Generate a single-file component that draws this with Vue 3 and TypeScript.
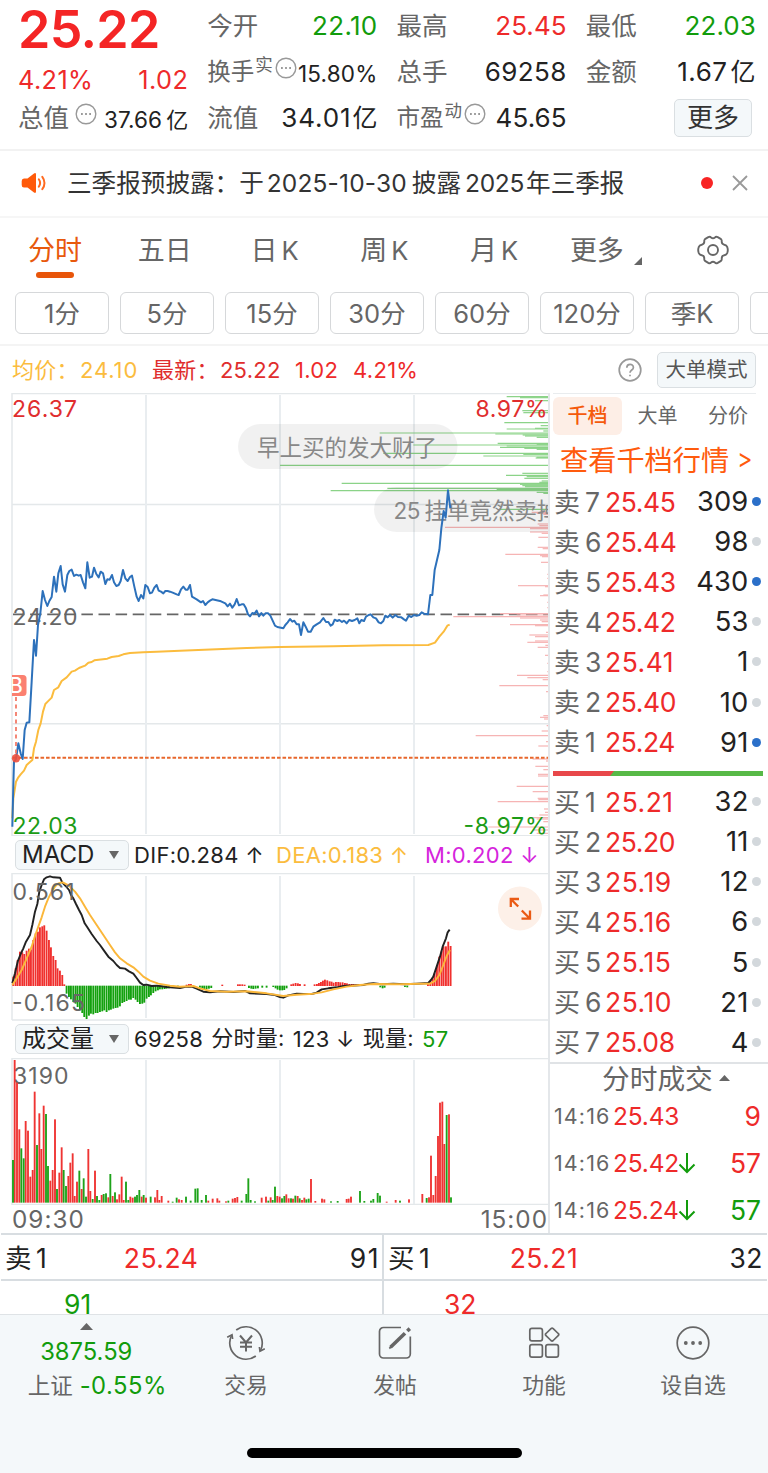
<script setup lang="ts">
type Tone = 'red' | 'green' | 'dark'
type Bar = [number, number]

interface Level { side: string; no: number; price: string; qty: number; big?: boolean }

const sells: Level[] = [
  { side: '卖', no: 7, price: '25.45', qty: 309, big: true },
  { side: '卖', no: 6, price: '25.44', qty: 98 },
  { side: '卖', no: 5, price: '25.43', qty: 430, big: true },
  { side: '卖', no: 4, price: '25.42', qty: 53 },
  { side: '卖', no: 3, price: '25.41', qty: 1 },
  { side: '卖', no: 2, price: '25.40', qty: 10 },
  { side: '卖', no: 1, price: '25.24', qty: 91, big: true },
]
const buys: Level[] = [
  { side: '买', no: 1, price: '25.21', qty: 32 },
  { side: '买', no: 2, price: '25.20', qty: 11 },
  { side: '买', no: 3, price: '25.19', qty: 12 },
  { side: '买', no: 4, price: '25.16', qty: 6 },
  { side: '买', no: 5, price: '25.15', qty: 5 },
  { side: '买', no: 6, price: '25.10', qty: 21 },
  { side: '买', no: 7, price: '25.08', qty: 4 },
]
const trades: { time: string; price: string; down: boolean; qty: number; tone: Tone }[] = [
  { time: '14:16', price: '25.43', down: false, qty: 9, tone: 'red' },
  { time: '14:16', price: '25.42', down: true, qty: 57, tone: 'red' },
  { time: '14:16', price: '25.24', down: true, qty: 57, tone: 'green' },
]
const periods = ['1分', '5分', '15分', '30分', '60分', '120分', '季K', '']

// The narrow "1" gets wider tracking so that the price column stays aligned.
const hasOne = (price: string) => price.includes('1')

// Chart series are stored in thirds of a pixel.
const priceLine =
  '37,1325 40,1200 42,1130 48,1122 55,1075 62,1105 68,1122 74,1035 80,1013 88,1012 95,890 102,765 108,812 114,720 121,685 128,618 135,645 142,663 148,648 155,636 162,575 169,620 175,565 182,543 188,598 195,620 202,570 208,558 215,554 222,573 229,569 236,572 242,570 249,592 256,610 262,532 269,578 276,575 282,548 289,567 296,577 302,560 309,565 316,597 322,583 329,584 336,570 342,592 349,603 356,600 362,588 369,555 376,580 383,588 390,576 396,572 403,605 410,635 416,648 423,630 430,640 436,600 443,606 450,625 456,623 463,608 470,600 476,617 483,620 490,625 496,618 503,618 510,620 518,623 530,628 536,630 543,613 550,605 557,614 563,614 570,600 576,635 590,643 603,652 609,648 616,660 623,652 630,647 637,643 650,646 663,649 676,655 683,664 690,656 697,668 704,658 710,642 717,661 725,658 731,658 738,670 744,688 750,694 757,684 764,686 770,677 777,694 784,684 790,692 797,685 804,685 811,692 818,707 825,722 832,726 850,730 856,720 863,712 870,702 877,710 883,707 890,718 897,718 903,750 910,712 917,725 924,740 932,740 940,725 950,718 960,712 970,699 978,711 985,711 992,722 998,718 1004,704 1012,708 1018,705 1026,711 1032,707 1040,715 1048,705 1056,708 1064,705 1072,700 1078,715 1084,705 1092,708 1098,695 1106,690 1112,688 1120,697 1128,700 1136,712 1143,715 1150,708 1156,692 1163,697 1170,690 1178,698 1186,690 1194,696 1204,697 1212,703 1218,707 1226,692 1234,696 1242,690 1250,692 1258,690 1265,682 1272,686 1284,688 1291,630 1297,630 1304,555 1311,525 1318,495 1324,430 1331,378 1337,398 1344,316 1351,370'
const averageLine =
  '37,1300 40,1240 48,1190 55,1177 62,1168 72,1157 80,1140 90,1131 97,1125 102,1090 108,1070 115,1035 122,1015 129,980 136,957 143,950 155,938 162,915 175,907 185,888 200,877 215,860 225,857 237,849 255,842 265,833 275,831 283,826 322,821 335,816 356,813 370,808 390,804 430,802 470,800 540,797 650,793 740,789 840,786 1000,784 1150,781 1285,780 1305,773 1318,755 1331,740 1342,722 1349,719'
const difLine =
  '37,460 45,430 53,395 62,372 70,355 78,335 90,315 97,285 105,245 112,222 118,185 125,165 132,148 140,142 150,139 160,142 180,143 187,158 197,168 207,180 213,195 220,205 228,222 237,240 245,255 254,280 262,292 275,312 290,333 300,345 312,362 325,380 340,393 350,405 360,414 375,416 387,424 400,431 410,444 420,458 430,465 440,464 455,468 470,467 500,471 540,474 560,470 575,470 590,476 610,485 630,487 660,484 700,486 735,483 750,490 800,492 825,495 840,501 850,503 865,496 890,491 910,492 935,492 950,488 965,478 985,475 1010,472 1030,468 1090,465 1105,461 1120,460 1145,463 1180,461 1215,463 1250,461 1285,459 1293,450 1300,440 1310,410 1320,380 1328,350 1338,325 1343,307 1349,299'
const deaLine =
  '37,465 50,445 65,420 80,385 95,350 105,318 115,290 125,262 135,230 145,205 155,185 165,170 175,160 188,157 200,163 212,172 225,185 240,205 255,230 270,255 290,285 310,315 330,345 345,367 360,385 380,400 400,412 415,425 430,440 450,452 475,461 510,467 540,470 580,468 600,475 630,483 680,485 740,484 800,490 850,498 890,494 940,491 965,487 1000,478 1040,470 1080,465 1120,462 1200,463 1260,461 1290,461 1305,453 1318,435 1330,405 1340,378 1350,360'

// Order-book depth: [y, start x], each bar runs to the right edge.
const depthSell: Bar[] = [
  [35, 710], [38, 750], [47, 795], [77, 757], [83, 760], [113, 703], [122, 812], [130, 795], [132, 710], [138, 820], [144, 329], [147, 676], [150, 758], [153, 765], [157, 800], [175, 683], [178, 800], [180, 430], [183, 710], [187, 690], [190, 763], [193, 800], [205, 340], [208, 760], [213, 640], [217, 800], [219, 797], [241, 30], [265, 757], [271, 708], [275, 770], [280, 763], [288, 815], [292, 808], [295, 215], [298, 750], [302, 757], [305, 765], [310, 352], [313, 680], [317, 182], [322, 800], [325, 820], [373, 690],
]
const depthBuy: Bar[] = [
  [382, 785], [385, 800], [388, 820], [396, 828], [417, 803], [422, 808], [427, 525], [431, 780], [441, 780], [445, 815], [457, 805], [487, 803], [491, 818], [508, 706], [512, 810], [515, 816], [532, 813], [568, 832], [580, 832], [602, 744], [605, 825], [630, 820], [632, 810], [652, 832], [668, 832], [686, 690], [690, 740], [695, 550], [699, 750], [705, 810], [710, 815], [719, 720], [722, 795], [742, 828], [750, 778], [755, 795], [768, 795], [772, 772], [781, 826], [787, 803], [811, 825], [835, 832], [860, 832], [871, 741], [878, 772], [884, 818], [902, 688], [920, 828], [992, 820], [997, 810], [1002, 822], [1022, 830], [1038, 815], [1052, 617], [1070, 828], [1083, 805], [1122, 788], [1128, 828], [1144, 796], [1154, 820], [1168, 804], [1173, 804], [1204, 740], [1220, 788], [1240, 803], [1244, 805], [1250, 683], [1272, 822], [1282, 825], [1290, 808], [1298, 780], [1302, 800], [1310, 820], [1326, 655], [1335, 790], [1345, 800],
]

const histogram: Bar[] = [
  [40, 440], [47, 415], [53, 390], [60, 365], [67, 367], [73, 372], [80, 362], [87, 356], [93, 358], [100, 330], [107, 310], [114, 305], [120, 292], [127, 289], [133, 286], [140, 302], [147, 330], [153, 352], [160, 378], [167, 390], [173, 415], [180, 422], [187, 435], [193, 463],
  [200, 490], [207, 500], [213, 507], [220, 515], [227, 520], [233, 530], [240, 540], [247, 548], [253, 560], [260, 566], [267, 556], [273, 550], [280, 552], [287, 548], [293, 548], [300, 545], [307, 543], [313, 540], [320, 545], [327, 540], [333, 538], [340, 535], [347, 533], [353, 532], [360, 528], [367, 518], [373, 515], [380, 512], [387, 508], [393, 508], [400, 503], [407, 508], [413, 515], [420, 521], [427, 520], [433, 517], [440, 505], [447, 500], [453, 495], [460, 488], [467, 483], [474, 480], [480, 477], [487, 477], [494, 476], [500, 475], [507, 474], [520, 472], [534, 472],
  [560, 464], [567, 462], [573, 462], [600, 472], [607, 474], [613, 476], [620, 476], [627, 475], [634, 473], [667, 464], [714, 463], [720, 463], [727, 463], [734, 464], [747, 473], [754, 475], [760, 476], [767, 475], [774, 474], [787, 472], [800, 472],
  [820, 470], [827, 474], [833, 478], [840, 480], [847, 480], [853, 479], [860, 474], [874, 463], [880, 461], [887, 459], [894, 460], [900, 462], [914, 463], [944, 463], [951, 462], [957, 459], [963, 456], [969, 452], [975, 449], [982, 451], [989, 454], [995, 455], [1001, 458], [1008, 456], [1015, 456], [1021, 457], [1028, 457], [1035, 459], [1041, 460], [1048, 462], [1055, 462], [1061, 462], [1068, 463], [1075, 463], [1141, 471], [1148, 474], [1154, 472], [1215, 470], [1222, 471],
  [1284, 462], [1291, 453], [1298, 445], [1304, 430], [1311, 405], [1318, 380], [1325, 364], [1331, 349], [1338, 349], [1345, 335], [1352, 348],
]
const histBase = 467

const rising: Bar[] = [
  [44, 690], [51, 758], [58, 898], [77, 873], [84, 902], [91, 1040], [98, 1020], [104, 785], [118, 850], [124, 957], [131, 827], [151, 1052], [158, 1020], [165, 868], [178, 1028], [185, 952], [205, 1038], [211, 998], [218, 970], [224, 1098], [231, 1055], [245, 1077], [265, 957], [271, 1083], [285, 1022], [305, 1095], [325, 1102], [338, 1098], [351, 1108], [358, 1093], [365, 1040], [371, 1110], [391, 1100], [398, 1103], [425, 1100], [438, 1103], [465, 1102], [472, 1080], [478, 1110], [485, 1098], [505, 1112], [537, 1108], [545, 1110], [625, 1112], [638, 1106], [652, 1105], [658, 1112], [678, 1114], [698, 1106], [705, 1104], [712, 1101], [785, 1103], [798, 1100], [812, 1102], [832, 1098], [839, 1100], [859, 1093], [866, 1105], [879, 1106], [893, 1098], [906, 1110], [913, 1103], [933, 1047], [946, 1113], [966, 1106], [973, 1108], [1040, 1107], [1046, 1106], [1053, 1100], [1160, 1115], [1187, 1110], [1227, 1108], [1267, 1092], [1287, 1102], [1293, 977], [1300, 1095], [1307, 1038], [1314, 918], [1320, 818], [1327, 815], [1333, 942], [1347, 853],
]
const falling: Bar[] = [
  [39, 990], [64, 955], [71, 985], [111, 945], [138, 852], [144, 1008], [171, 1077], [191, 1020], [198, 1068], [238, 1022], [251, 1045], [258, 1100], [278, 1107], [291, 1098], [298, 1110], [311, 1092], [318, 1090], [331, 1032], [345, 1087], [378, 1055], [385, 1110], [405, 1100], [411, 1095], [418, 1080], [431, 1095], [452, 1100], [518, 1115], [530, 1103], [558, 1100], [572, 1112], [586, 1076], [593, 1075], [605, 1110], [618, 1095], [685, 1112], [725, 1112], [739, 1092], [745, 1045], [752, 1110], [765, 1114], [805, 1112], [818, 1110], [825, 1070], [846, 1105], [853, 1098], [873, 1105], [886, 1097], [899, 1105], [919, 1108], [926, 1106], [993, 1114], [1013, 1113], [1080, 1083], [1093, 1113], [1113, 1112], [1120, 1107], [1133, 1089], [1140, 1097], [1200, 1112], [1280, 1104], [1340, 855], [1353, 1102],
]
const volBase = 1118
</script>

<template>
  <div class="page">
    <section class="quote">
      <div class="q-col">
        <div class="last">25.22</div>
        <div class="chg red"><span>4.21%</span><span>1.02</span></div>
        <div class="q-row first-total">
          <span class="lab">总值</span>
          <svg class="dots" viewBox="0 0 22 22"><circle cx="11" cy="11" r="9.8" /><path d="M6 11h1.8M10.1 11h1.8M14.2 11H16" /></svg>
          <b class="small">37.66<i>亿</i></b>
        </div>
      </div>
      <div class="q-col">
        <div class="q-row"><span class="lab">今开</span><b class="green open">22.10</b></div>
        <div class="q-row tight">
          <span class="lab narrow">换手</span><sup>实</sup>
          <svg class="dots up" viewBox="0 0 22 22"><circle cx="11" cy="11" r="9.8" /><path d="M6 11h1.8M10.1 11h1.8M14.2 11H16" /></svg>
          <b class="small pct">15.80%</b>
        </div>
        <div class="q-row"><span class="lab">流值</span><b class="float">34.01<i>亿</i></b></div>
      </div>
      <div class="q-col">
        <div class="q-row"><span class="lab">最高</span><b class="red">25.45</b></div>
        <div class="q-row"><span class="lab">总手</span><b class="total">69258</b></div>
        <div class="q-row tight">
          <span class="lab narrow">市盈</span><sup>动</sup>
          <svg class="dots up" viewBox="0 0 22 22"><circle cx="11" cy="11" r="9.8" /><path d="M6 11h1.8M10.1 11h1.8M14.2 11H16" /></svg>
          <b>45.65</b>
        </div>
      </div>
      <div class="q-col">
        <div class="q-row"><span class="lab">最低</span><b class="green">22.03</b></div>
        <div class="q-row"><span class="lab">金额</span><b class="amount">1.67<i>亿</i></b></div>
        <div class="q-row end"><button class="more">更多</button></div>
      </div>
    </section>

    <section class="notice">
      <svg class="horn" viewBox="0 0 26 22">
        <path fill="#ff5a0a" d="M3 6.500Q.7 6.500 .7 9V13Q.7 15.500 3 15.500H6.500L13 20.600Q15 21.500 15 19.500V2.500Q15 .5 13 1.400L6.500 6.500Z" />
        <path d="M17.800 7.200c1.600 2.300 1.600 5.300 0 7.600M21.300 4.800c2.900 3.600 2.900 8.800 0 12.400" fill="none" stroke="#ff6a20" stroke-width="2" stroke-linecap="round" />
      </svg>
      <div class="n-text">
        <span>三季报预披露：</span><span>于</span><span class="num">2025-10-30</span><span>披露</span><span class="num year">2025</span><span>年三季报</span>
      </div>
      <i class="reddot"></i>
      <svg class="close" viewBox="0 0 16 16"><path d="M1 1l14 14M15 1L1 15" /></svg>
    </section>

    <nav class="tabs">
      <span class="on">分时</span><span>五日</span><span>日<em>K</em></span><span>周<em>K</em></span><span>月<em>K</em></span>
      <span class="tri">更多<svg viewBox="0 0 8 8"><path d="M8 0v8H0z" /></svg></span>
      <span class="set">
        <svg class="gear" viewBox="0 0 32 30">
          <path d="M11.300 2.200Q13 1.300 14 2.400Q16 4 18 2.400Q19 1.300 20.700 2.200L24 4.100Q25 5 24.700 6.800Q24.800 9.200 27.300 9.800Q29.500 10.200 30.300 12.200Q31.300 15 30.300 17.800Q29.500 19.800 27.300 20.200Q24.800 20.800 24.700 23.200Q25 25 24 25.900L20.700 27.800Q19 28.700 18 27.600Q16 26 14 27.600Q13 28.700 11.300 27.800L8 25.900Q7 25 7.300 23.200Q7.200 20.800 4.700 20.200Q2.500 19.800 1.700 17.800Q.7 15 1.700 12.200Q2.500 10.200 4.700 9.800Q7.200 9.200 7.300 6.800Q7 5 8 4.100z" />
          <circle cx="16" cy="15" r="5" />
        </svg>
      </span>
    </nav>

    <div class="periods"><span v-for="p in periods" :key="p">{{ p }}</span></div>

    <div class="legend">
      <span class="avg">均价：<em>24.10</em></span>
      <span class="new">最新：<em>25.22</em></span>
      <em class="red v1">1.02</em><em class="red">4.21%</em>
      <svg class="help" viewBox="0 0 24 24"><circle cx="12" cy="12" r="10.800" /><path d="M8.800 9.800c0-4.600 6.600-4.400 6.600-.4 0 2.600-3.400 2.600-3.400 5.400" /><path d="M12 16.700v1.600" /></svg>
      <button class="mode">大单模式</button>
    </div>

    <main class="body">
      <div class="left">
        <svg class="chart" width="548" height="443" viewBox="0 393 548 443">
          <g class="grid">
            <path d="M12 393.500H548M12 393V836M12 835.700H548M12 504.500H548M12 723.800H548" />
            <path class="v" d="M146 395V834M280 395V834M414 395V834" />
          </g>
          <path d="M13 614.300H548" stroke="#666" stroke-width="1.700" stroke-dasharray="11.500 5.600" />
          <text x="12.500" y="625" class="axis" textLength="65">24.20</text>
          <g transform="translate(270 385) scale(.33333)" stroke-width="3.600">
            <path v-for="(d, i) in depthSell" :key="'s' + i" :d="`M${d[1]} ${d[0]}H835`" stroke="#8bd388" />
            <path v-for="(d, i) in depthBuy" :key="'b' + i" :d="`M${d[1]} ${d[0]}H835`" stroke="#f6b4b4" />
          </g>
          <rect x="238" y="424" width="219.500" height="45" rx="22.500" fill="#000" opacity=".055" />
          <text x="257" y="455.500" class="chat" textLength="180">早上买的发大财了</text>
          <path d="M548 487H396.500a22.500 22.500 0 0 0 0 45H548z" fill="#000" opacity=".055" />
          <text x="393.500" y="518.500" class="chat" textLength="27">25</text>
          <text x="424.500" y="518.500" class="chat" textLength="135">挂单竟然卖掉</text>
          <path d="M13 757.700H548" stroke="#e8672c" stroke-width="2" stroke-dasharray="3.600 1.900" />
          <g transform="translate(0 385) scale(.33333)" fill="none" stroke-linejoin="round">
            <polyline :points="averageLine" stroke="#fbbc3e" stroke-width="6" />
            <polyline :points="priceLine" stroke="#2d71bb" stroke-width="6" />
          </g>
          <path d="M16 697V756" stroke="#f37a68" stroke-width="1.800" stroke-dasharray="4 3.500" />
          <circle cx="16" cy="758.300" r="4.200" fill="#ee4f3d" opacity=".9" />
          <path d="M12 675h11a3.500 3.500 0 0 1 3.500 3.500v14a3.500 3.500 0 0 1-3.500 3.500H12z" fill="#fb8070" />
          <svg x="12" y="675" width="16" height="22"><text x="-3" y="18" class="flag">B</text></svg>
          <text x="12" y="417" class="axis up" textLength="65">26.37</text>
          <text x="12.500" y="834" class="axis down" textLength="65">22.03</text>
          <text x="475.500" y="417" class="axis up" textLength="72">8.97%</text>
          <text x="463.500" y="834" class="axis down" textLength="84">-8.97%</text>
        </svg>

        <div class="ind">
          <button class="pick">MACD<svg viewBox="0 0 10 8"><path d="M0 0h10L5 8z" /></svg></button>
          <span class="dif">DIF:0.284 ↑</span><span class="dea">DEA:0.183 ↑</span><span class="m">M:0.202 ↓</span>
        </div>

        <svg class="chart" width="548" height="148" viewBox="0 873 548 148">
          <g class="grid">
            <path d="M12 873.500H548M12 873V1020M12 1020H548" />
            <path class="v" d="M146 876V1018M280 876V1018M414 876V1018" />
          </g>
          <g transform="translate(0 830) scale(.33333)">
            <rect
              v-for="(h, i) in histogram" :key="i" :x="h[0] - 3" :y="Math.min(h[1], histBase)"
              width="5.600" :height="Math.abs(h[1] - histBase) + 1" :fill="h[1] < histBase ? '#f0302e' : '#13a10e'"
            />
            <g fill="none" stroke-linejoin="round" stroke-width="5.800">
              <polyline :points="difLine" stroke="#222" />
              <polyline :points="deaLine" stroke="#fbb73a" />
            </g>
          </g>
          <text x="12.500" y="899.500" class="axis" textLength="62">0.561</text>
          <text x="12" y="1010.500" class="axis" textLength="73">-0.165</text>
          <circle cx="520" cy="908.500" r="22" fill="#fdf0e8" />
          <path d="M518.200 906.500L511 899.200M510.800 907V899H519M521.800 910.500L529.500 918.200M530 910.500V918.600H521.500" fill="none" stroke="#ea5a14" stroke-width="2.300" />
        </svg>

        <div class="ind vol">
          <button class="pick">成交量<svg viewBox="0 0 10 8"><path d="M0 0h10L5 8z" /></svg></button>
          <span>69258</span><span class="cn">分时量<em>:</em></span><span>123 ↓</span><span class="cn">现量<em>:</em></span><span class="green">57</span>
        </div>

        <svg class="chart" width="548" height="147" viewBox="0 1058 548 147">
          <g class="grid">
            <path d="M12 1058.500H548M12 1058V1205M12 1204.500H548" />
            <path class="v" d="M146 1060V1204M280 1060V1204M414 1060V1204" />
          </g>
          <text x="13" y="1084" class="axis" textLength="55.500">3190</text>
          <g transform="translate(0 830) scale(.33333)">
            <rect v-for="(b, i) in rising" :key="'r' + i" :x="b[0] - 2.800" :y="b[1]" width="5.600" :height="volBase - b[1]" fill="#ef3433" />
            <rect v-for="(b, i) in falling" :key="'f' + i" :x="b[0] - 2.800" :y="b[1]" width="5.600" :height="volBase - b[1]" fill="#1ea31a" />
          </g>
        </svg>
        <div class="times"><span>09:30</span><span>15:00</span></div>
      </div>

      <aside class="right">
        <div class="r-tabs"><span class="on">千档</span><span>大单</span><span>分价</span></div>
        <a class="link">查看千档行情<em>&gt;</em></a>
        <div v-for="l in sells" :key="l.price" class="lvl">
          <span class="side">{{ l.side }}</span><span class="no">{{ l.no }}</span><span class="px" :class="{ one: hasOne(l.price) }">{{ l.price }}</span><span class="qty">{{ l.qty }}</span><i :class="{ big: l.big }"></i>
        </div>
        <svg class="ratio" viewBox="0 0 210 5"><path fill="#57b947" d="M0 0h210v5H0z" /><path fill="#e8484a" d="M0 0h61l-4 5H0z" /></svg>
        <div v-for="l in buys" :key="l.price" class="lvl">
          <span class="side">{{ l.side }}</span><span class="no">{{ l.no }}</span><span class="px" :class="{ one: hasOne(l.price) }">{{ l.price }}</span><span class="qty">{{ l.qty }}</span><i :class="{ big: l.big }"></i>
        </div>
        <div class="t-head">分时成交<svg viewBox="0 0 11 6"><path d="M0 6L5.500 0 11 6z" /></svg></div>
        <div v-for="t in trades" :key="t.price" class="trade">
          <span class="time">{{ t.time }}</span><span class="tp">{{ t.price }}</span>
          <svg viewBox="0 0 18 22"><path v-if="t.down" d="M9 1v18.500M1.500 12.500L9 20l7.500-7.500" /></svg>
          <span class="tq" :class="t.tone">{{ t.qty }}</span>
        </div>
      </aside>
    </main>

    <section class="best">
      <div class="half">
        <div class="b-row"><span>卖<em>1</em></span><span class="red">25.24</span><span class="n91">91</span></div>
        <div class="b-next green">91</div>
      </div>
      <div class="half second">
        <div class="b-row"><span>买<em>1</em></span><span class="red">25.21</span><span>32</span></div>
        <div class="b-next red">32</div>
      </div>
    </section>

    <footer class="bar">
      <div class="items">
        <div class="index">
          <svg viewBox="0 0 13 7"><path d="M0 7L6.500 0 13 7z" /></svg>
          <span class="green pts">3875.59</span>
          <span class="name">上证<em class="green">-0.55%</em></span>
        </div>
        <div class="item">
          <svg viewBox="0 0 40 36">
            <path d="M10.200 5A16.300 16.300 0 0 1 34.700 25M29.800 31A16.300 16.300 0 0 1 5.300 11" />
            <path d="M1.200 12.200L6 9.800L6.600 14M38.800 23.800L34 26.200L33.400 22" />
            <path d="M14 10.500L20 17.500L26 10.500M20 17.500V26.500M14 17.500H26M14 21.800H26" stroke-width="2" />
          </svg>交易
        </div>
        <div class="item">
          <svg viewBox="0 0 40 36">
            <path d="M26 2.500H8.500a4 4 0 0 0-4 4V29a4 4 0 0 0 4 4h22.800a4 4 0 0 0 4-4V11.500" />
            <path d="M15.500 22.300L30 8.200" stroke-width="3.600" /><path d="M32.300 6L34.800 3.600" stroke-width="3.600" /><path d="M14.300 23.500l2.500-2.300" />
          </svg>发帖
        </div>
        <div class="item">
          <svg viewBox="0 0 40 36">
            <rect x="5.800" y="3.300" width="12.600" height="12.600" rx="2.200" /><rect x="5.800" y="19.600" width="12.600" height="12.600" rx="2.200" /><rect x="21.800" y="19.600" width="12.600" height="12.600" rx="2.200" />
            <path d="M27 3.700L22 8.500q-1.200 1.100 0 2.200L27 15.500q1.100 1 2.200 0L34.200 10.700q1.200-1.100 0-2.200L29.200 3.700q-1.100-1-2.200 0z" />
          </svg>功能
        </div>
        <div class="item">
          <svg viewBox="0 0 40 36"><circle cx="20" cy="18" r="15.800" /><g class="fill"><circle cx="12.800" cy="18" r="1.900" /><circle cx="20" cy="18" r="1.900" /><circle cx="27.200" cy="18" r="1.900" /></g></svg>设自选
        </div>
      </div>
      <div class="home"></div>
    </footer>
  </div>
</template>

<style>
body { margin: 0; background: #fff; }
</style>

<style scoped>
.page { width: 768px; height: 1473px; overflow: hidden; background: #fff; color: #222; font-family: Inter, "Noto Sans CJK SC", sans-serif; font-weight: 400; }
.page * { box-sizing: border-box; }
em, i, b { font-style: normal; font-weight: 400; }
svg { display: block; flex: none; }
button { font-family: inherit; border: 1.500px solid #dadfe2; background: #f4f8fa; color: #333; padding: 0; border-radius: 5px; }
.red { color: #ee2a2a; }
.green { color: #129c0c; }

.quote { height: 151px; border-bottom: 2px solid #f2f2f2; padding: 3px 12px 0 18px; display: grid; grid-template-columns: repeat(4, 1fr); gap: 19px; }
.q-col { min-width: 0; }
.q-row { height: 46px; display: flex; align-items: center; justify-content: space-between; white-space: nowrap; line-height: 40px; }
.q-row b { font-size: 26px; letter-spacing: .1px; }
.q-row b i { margin-left: 1px; font-size: 25px; }
.q-row b.open { letter-spacing: .3px; }
.q-row b.total { letter-spacing: .4px; }
.q-row b.float { letter-spacing: .9px; }
.q-row b.float i { letter-spacing: 0; }
.amount i { padding-left: 2px; }
.q-row b.amount { letter-spacing: .5px; }
.lab { font-size: 25.500px; color: #666; }
.lab.narrow { font-size: 23.500px; }
.q-row.end { justify-content: flex-end; padding-right: 4px; }
.q-row.tight { justify-content: flex-start; }
.q-row.tight b { margin-left: auto; }
sup { font-size: 17.500px; line-height: 20px; color: #666; margin: 0 2px 14px 1px; vertical-align: baseline; }
.dots { width: 22px; height: 22px; fill: none; stroke: #999; stroke-width: 1.400; }
.dots path { stroke-width: 1.800; }
.dots.up { margin-bottom: 9px; }
.last { height: 54px; line-height: 54px; font-size: 52px; font-weight: 600; color: #f42525; letter-spacing: -.7px; }
.chg { height: 38px; padding-top: 2px; line-height: 42px; display: flex; justify-content: space-between; font-size: 25.300px; letter-spacing: .4px; }
.first-total .dots { margin: 0 auto 8px 6px; }
.q-row b.small { font-size: 22.500px; padding-top: 4px; }
.q-row b.small i { font-size: 22px; margin-left: 4px; }
.q-row b.pct { letter-spacing: .2px; }
.more { width: 78px; height: 38px; font-size: 26px; line-height: 34px; }

.notice { height: 67px; border-bottom: 2px solid #f6f6f6; display: flex; align-items: center; padding: 0 20px 1px 21px; }
.horn { width: 26px; height: 22px; margin-right: 20px; }
.n-text { flex: 1; display: flex; font-size: 24.600px; color: #333; white-space: nowrap; line-height: 36px; }
.num { margin: 0 5px 0 3px; font-size: 24.500px; letter-spacing: .15px; }
.year { margin: 0 2px 0 4px; letter-spacing: -.3px; }
.reddot { width: 12px; height: 12px; border-radius: 50%; background: #f82424; }
.close { width: 16px; height: 16px; margin-left: 19px; stroke: #999; stroke-width: 1.800; }

.tabs { height: 66px; display: grid; grid-template-columns: repeat(6, 109.800px) 1fr; font-size: 27px; color: #666; }
.tabs > span { display: flex; justify-content: center; align-items: center; line-height: 40px; position: relative; }
.tabs em { margin-left: 4px; font-size: 25.500px; }
.tabs .on { color: #e8590c; }
.tabs .on::after { content: ""; position: absolute; left: 36px; top: 54px; width: 38px; height: 6px; border-radius: 3px; background: #e8550a; }
.tri { padding-left: 4px; }
.tri svg { width: 8px; height: 8px; margin: 20px 0 0 10px; fill: #666; }
.tabs .set { padding: 0 0 2px 0; }
.gear { width: 32px; height: 30px; fill: none; stroke: #666; stroke-width: 1.900; }

.periods { height: 62px; border-bottom: 2px solid #f4f4f4; padding: 8px 0 0 15px; display: flex; gap: 11px; overflow: hidden; }
.periods span { flex: none; width: 94px; height: 42px; border: 1.500px solid #d6d8da; border-radius: 6px; text-align: center; line-height: 41px; font-size: 25.500px; color: #666; }

.legend { height: 47px; display: flex; align-items: center; padding: 0 12px; font-size: 22px; line-height: 36px; letter-spacing: .3px; white-space: nowrap; }
.avg { color: #fbbc3e; width: 140px; }
.avg em { margin-left: 1px; letter-spacing: .9px; }
.new { color: #e02d2d; width: 143px; }
.new em { margin-left: 1px; }
.v1 { width: 58px; }
.help { width: 24px; height: 24px; margin: 0 15px 0 auto; fill: none; stroke: #999; stroke-width: 1.700; }
.mode { width: 99px; height: 36px; font-size: 20.500px; line-height: 32px; color: #555; }

.body { display: flex; height: 840px; }
.left { width: 548px; }
.grid path { stroke: #e4e8ea; stroke-width: 1.500; fill: none; }
.grid .v { stroke: #e9edf0; stroke-width: 2; }
.axis { font-size: 23px; fill: #666; }
.axis.up { fill: #e02d2d; }
.axis.down { fill: #1b9c16; }
.chat { font-size: 22.500px; fill: #888; }
.flag { font-size: 21px; font-weight: 500; fill: #fff; }
.ind { height: 37px; display: flex; align-items: center; padding-left: 15px; font-size: 22px; white-space: pre; letter-spacing: .3px; }
.pick { width: 114px; height: 30px; margin-right: 5px; padding: 0 9px 0 6px; font-size: 24px; line-height: 27px; color: #222; display: flex; align-items: center; justify-content: space-between; }
.pick svg { width: 10px; height: 8px; fill: #666; }
.dif { width: 142px; }
.dea { width: 149px; color: #fbbc3e; }
.m { color: #d524dc; }
.vol { gap: 8px; padding-bottom: 2px; line-height: 30px; }
.vol .pick { margin-right: -3px; }
.cn { padding-bottom: 2px; }
.times { height: 28px; padding-left: 12px; display: flex; justify-content: space-between; font-size: 24.300px; line-height: 29px; letter-spacing: 1px; color: #666; }

.right { width: 220px; border-left: 2px solid #e4e7ea; padding-left: 3px; }
.r-tabs { height: 43px; margin-right: 12px; border-top: 1.500px solid #e9ecee; padding-top: 3px; display: grid; grid-template-columns: 69px 71px 1fr; font-size: 20px; color: #666; text-align: center; line-height: 38px; }
.r-tabs span:last-child { padding-left: 7px; white-space: nowrap; }
.r-tabs .on { height: 38px; background: #fdeee6; border-radius: 6px; color: #f55a0c; font-weight: 500; }
.link { height: 45.500px; display: flex; align-items: center; padding: 0 0 0 7px; font-size: 28.200px; color: #ff5b0d; }
.link em { margin-left: 7px; font-size: 27px; transform: scaleX(.85); }
.lvl { height: 40.100px; display: flex; align-items: center; font-size: 26.500px; line-height: 40px; }
.side { width: 32px; padding: 2px 0 0 1px; font-size: 26px; color: #666; }
.no { width: 20px; color: #666; }
.px { color: #ee2a2a; letter-spacing: -.4px; }
.px.one { letter-spacing: .5px; }
.qty { margin-left: auto; padding: 1px 3px 0 0; font-size: 27.300px; letter-spacing: .2px; }
.lvl i { width: 9px; height: 9px; border-radius: 50%; background: #d3d8dc; margin-right: 7.500px; }
.lvl i.big { background: #2b70c9; }
.ratio { width: 210px; height: 5px; margin: 8.500px 0 6px; }
.t-head { margin-left: -3px; height: 34px; border-top: 2px solid #e0e3e6; display: flex; align-items: center; padding: 0 0 2px 52px; font-size: 27.700px; line-height: 30px; color: #666; }
.t-head svg { width: 11px; height: 6px; margin: 0 0 2px 6px; fill: #666; }
.trade { height: 46.700px; display: flex; align-items: center; padding: 0 7px 7px 1px; line-height: 36px; }
.time { width: 59px; font-size: 21.500px; letter-spacing: 1.100px; color: #666; }
.tp { width: 65px; font-size: 24.500px; letter-spacing: -.2px; color: #ee2a2a; }
.trade svg { width: 18px; height: 22px; fill: none; stroke: #129c0c; stroke-width: 2; }
.tq { margin-left: auto; font-size: 26.500px; }

.best { height: 81px; display: grid; grid-template-columns: 381px 1fr; border-top: 2px solid #d8dde1; margin: 0 1px; overflow: hidden; }
.second { border-left: 2px solid #d8dde1; }
.b-row { height: 46px; border-bottom: 2px solid #d8dde1; display: grid; grid-template-columns: 90px 132px 1fr; align-items: center; padding: 2px 2px 0 4px; font-size: 26.500px; letter-spacing: .5px; line-height: 40px; }
.second .b-row { padding-right: 4px; }
.b-row em { margin-left: 4px; }
.b-row span:nth-child(2) { text-align: center; }
.b-row span:nth-child(3) { text-align: right; }
.b-row .n91 { letter-spacing: 1.500px; }
.b-next { padding-left: 63px; font-size: 26.500px; line-height: 46px; }
.second .b-next { padding-left: 60px; }

.bar { height: 159px; background: #f4f8fa; border-top: 1.500px solid #dfe3e6; color: #666; }
.items { height: 133px; display: grid; grid-template-columns: 171.500px repeat(4, 149px); font-size: 21.800px; }
.index { display: flex; flex-direction: column; align-items: center; padding-left: 1px; }
.index svg { width: 13px; height: 7px; margin-top: 8px; fill: #666; }
.pts { font-size: 23.800px; line-height: 30px; margin-top: 7px; }
.name { line-height: 30px; margin-top: 4px; padding-left: 22px; white-space: nowrap; font-size: 22.500px; }
.name em { font-size: 23.800px; letter-spacing: .5px; margin-left: 7px; }
.item { display: flex; flex-direction: column; align-items: center; line-height: 30px; padding-top: 10px; }
.item svg { width: 40px; height: 36px; margin-bottom: 9px; fill: none; stroke: #666; stroke-width: 1.700; }
.fill { fill: #666; stroke: none; }
.home { width: 275px; height: 10px; border-radius: 5px; background: #000; margin-left: 246.500px; }
</style>
